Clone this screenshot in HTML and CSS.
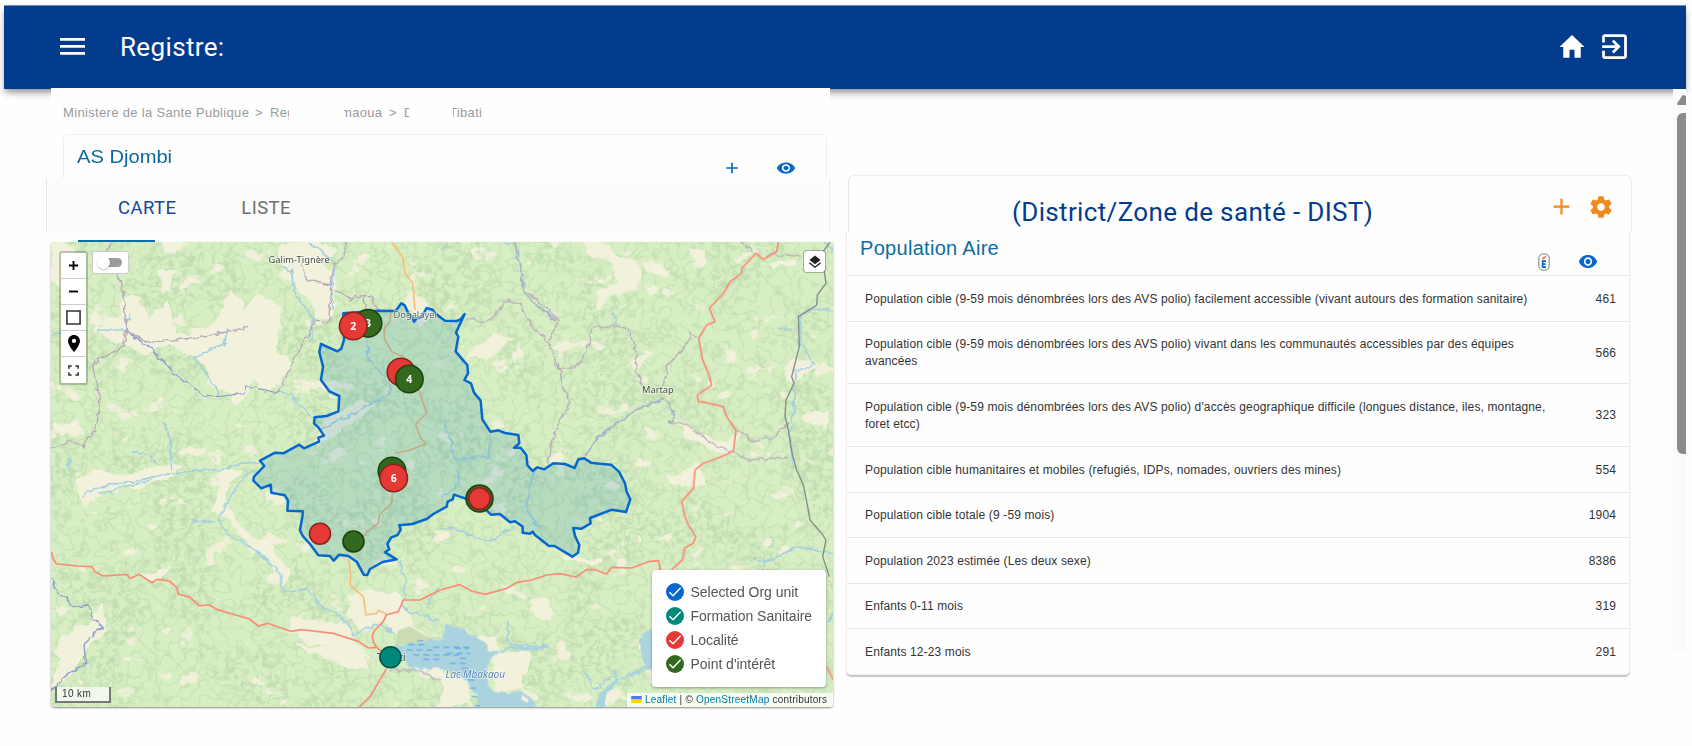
FILE: index.html
```html
<!DOCTYPE html>
<html lang="fr">
<head>
<meta charset="utf-8">
<title>Registre</title>
<link rel="stylesheet" href="styles.css">
</head>
<body>
<div class="app">
<header class="topbar">
  <svg class="i-menu" viewBox="0 0 25 17" preserveAspectRatio="none"><path fill="#fff" d="M0 0h25v2.8H0zM0 6.9h25v2.8H0zM0 13.9h25v2.8H0z"/></svg>
  <h1 class="brand">Registre:</h1>
  <svg class="i-home" viewBox="0 0 24 24" preserveAspectRatio="none"><path fill="#fff" d="M10 20v-6h4v6h5v-8h3L12 3 2 12h3v8z"/></svg>
  <svg class="i-exit" viewBox="0 0 24 24"><path fill="#fff" d="M10.09 15.59 11.5 17l5-5-5-5-1.41 1.41L12.67 11H3v2h9.67l-2.58 2.59zM19 3H5c-1.11 0-2 .9-2 2v4h2V5h14v14H5v-4H3v4c0 1.1.89 2 2 2h14c1.1 0 2-.9 2-2V5c0-1.1-.9-2-2-2z"/></svg>
</header>
<main class="content">
  <section class="left">
    <div class="upper">
      <nav class="crumbs"><span class="c1">Ministere de la Sante Publique</span><span class="c2">&gt;</span><span class="c3">Reg</span><span class="c4"><span>maoua</span></span><span class="c5">&gt;</span><span class="c6">D</span><span class="c7"><span>Tibati</span></span></nav>
      <div class="unit">
        <span class="unit-name">AS Djombi</span>
        <svg class="i-sm i-add" viewBox="0 0 24 24" preserveAspectRatio="none"><path fill="#0667d0" d="M19 13h-6v6h-2v-6H5v-2h6V5h2v6h6v2z"/></svg>
        <svg class="i-sm" viewBox="0 0 24 24" preserveAspectRatio="none"><path fill="#0667d0" d="M12 4.500C7 4.500 2.730 7.610 1 12c1.730 4.390 6 7.500 11 7.500s9.270-3.110 11-7.500c-1.730-4.390-6-7.500-11-7.500zM12 17c-2.760 0-5-2.240-5-5s2.240-5 5-5 5 2.240 5 5-2.240 5-5 5zm0-8c-1.660 0-3 1.340-3 3s1.340 3 3 3 3-1.340 3-3-1.340-3-3-3z"/></svg>
      </div>
    </div>
    <div class="tabs"><span class="tab on">CARTE</span><span class="tab">LISTE</span></div>
    <div class="ink"></div>
    <div class="map">
<svg class="tiles" viewBox="51 242 782 465">
<defs>
<filter id="wood" x="0" y="0" width="100%" height="100%" color-interpolation-filters="sRGB"><feTurbulence type="fractalNoise" baseFrequency=".014 .016" numOctaves="2" seed="4" result="a"/><feColorMatrix in="a" values="0 0 0 0 .75 0 0 0 0 .86 0 0 0 0 .69 9 0 0 0 -4.300" result="m"/><feTurbulence type="fractalNoise" baseFrequency=".16" numOctaves="3" seed="9"/><feColorMatrix values="0 0 0 0 .75 0 0 0 0 .86 0 0 0 0 .7 0 8 0 0 -4"/><feComposite in2="m" operator="in"/></filter>
<filter id="vein" x="0" y="0" width="100%" height="100%" color-interpolation-filters="sRGB"><feTurbulence type="fractalNoise" baseFrequency=".07" numOctaves="2" seed="21"/><feColorMatrix values="0 0 0 0 .73 0 0 0 0 .85 0 0 0 0 .68 1 0 0 0 0"/><feComponentTransfer><feFuncA type="table" tableValues="0 0 0 0 0 0 0 0 0 0 0 .1 .85 .1 0 0 0 0 0 0 0 0 0 0 0"/></feComponentTransfer></filter>
<filter id="clear" x="0" y="0" width="100%" height="100%" color-interpolation-filters="sRGB"><feTurbulence type="fractalNoise" baseFrequency=".035 .045" numOctaves="4" seed="33"/><feColorMatrix values="0 0 0 0 .945 0 0 0 0 .945 0 0 0 0 .86 0 0 14 0 -9.500"/></filter>
<filter id="rough" x="-10%" y="-10%" width="120%" height="120%" color-interpolation-filters="sRGB"><feTurbulence type="fractalNoise" baseFrequency=".05" numOctaves="3" seed="2"/><feDisplacementMap in="SourceGraphic" scale="18" xChannelSelector="R" yChannelSelector="G"/></filter>
<filter id="wiggle" filterUnits="userSpaceOnUse" x="40" y="230" width="800" height="485" color-interpolation-filters="sRGB"><feTurbulence type="fractalNoise" baseFrequency=".13" numOctaves="2" seed="7"/><feDisplacementMap in="SourceGraphic" scale="7" xChannelSelector="R" yChannelSelector="G"/></filter>
</defs>
<rect x="50" y="242" width="783" height="465" fill="#d7edc2"/>
<rect x="50" y="242" width="783" height="465" filter="url(#wood)" opacity=".65"/>
<rect x="50" y="242" width="783" height="465" filter="url(#vein)" opacity=".75"/>
<rect x="50" y="242" width="783" height="465" filter="url(#clear)"/>
<g fill="#f1f1dc" filter="url(#rough)">
 <g transform="translate(40 230) scale(.33333)">
  <path d="M30 37h65l-10 70 20 40-30 30-45-20z"/><path d="M240 220l60-20 20 80 60-60 30 80 60 10 50-40 60-100 40 70 30-50 80 50-20 90 40 80-50 70-60-30-40 80-70-40-60-110-70-30-110 20-70-50z"/>
  <path d="M730 37h150l-20 60 30 60-10 90-50 20-30-60-60-60-20-60z"/><path d="M150 300l110-60 30 60-60 40zM360 120h40v60h-30zM370 37h70l-20 40h-40zM35 580l90-10-60 50z"/><path d="M820 620l50-70 100-40 30 20-80 60-80 60z"/><path d="M1090 230l40-40 50 60-40 40z"/>
 </g>
 <g transform="translate(440 230) scale(.33333)">
  <path d="M430 37h70l20 30 60 20 30 40-20 60-50 0-60 60-10-50 60-50-30-60-60-10zM610 80l50 20 30 30-20 10-60-30zM750 60h50v50l-30 10zM80 380l90-70 40 10-30 40-90 30zM210 370l20 50 10-80zM970 95l90-5v20l-70 8zM1030 410l80-30 20 30-70 50zM1090 545l70 0-10 50-50-20zM690 570l80 20 90 60 30-50 0 80-100-30zM610 180l50-2-20 20z"/>
 </g>
 <g transform="translate(40 470) scale(.33333)">
  <path d="M95 30l60-20h170l50-30 60 20-110 50-130 20-60 40zM540 0l60 0-40 70 20 80 120 90 50 60-10 60-60-20 10-60-110-110-70-50 20-60zM740 440l180 20 30 60 50 50-100-30-160-50zM920 360l150 10 60 110 60 10-80 30-80-60-80 20zM60 510l80-60 50-50 10 80-60 60-50 80-60 30 30-80zM760 520l190 20 50 60-80-10zM300 310l90-20-40 50z"/><path d="M1090 540l110 40v60l-90-60z"/>
 </g>
 <g transform="translate(440 470) scale(.33333)">
  <path d="M270 370l50 20 10 60-20 0-50-40zM680 10l90-10 40 40-80 20zM60 480l100 20 40 60-100-20zM165 550l90-10 10 60-30 60-60 0zM0 580l60 30 40 60 0 40H0zM580 180l30 30-10 20zM370 260l40 0 80 0 0 30-110-10z"/>
 </g>
</g>
<g transform="translate(380 550) scale(.33333)">
 <path fill="#cbdcb4" d="M45 285l10-45 35-10 50 30 50 5-90 15z"/>
 <path fill="#aad3df" filter="url(#rough)" d="M40 290l60-14 85-8 10-45 45 14 48 22 30 20 5 22 30 4 35-18h40l75 2-5 8-60 5-50-4-35 12-22 14-10 30 2 40 14 34 50 2 40-10 35 30 10 35H290l5-40-30-36 0-20-90-35-60 5-45-25z"/>
 <path fill="#f1f1dc" d="M342 330l50-20 50 12-5 30-30 30 30 25-40 15-45-5-15-40zM425 434l22 15-5 10-18-12z"/>
 <path fill="#aad3df" filter="url(#rough)" d="M800 240l30-4v110l-70 30-40 16-40 38-10 40h-25l15-40 40-35 55-25 45-22-14-30-8-40z"/>
 <path stroke="#4d9ee8" stroke-width="3" stroke-dasharray="18 12" d="M85 284h60M112 272h30M80 300h80M100 315h150M160 292h110M130 328h60M200 310h70M210 340h60M225 295h40M240 325h30M245 355h30M265 390h30M270 415h22M275 440h20M285 468h15" fill="none"/>
</g>
<g fill="none" stroke="#a5cfe2" stroke-width="1.300" stroke-linejoin="round" filter="url(#wiggle)">
 <g transform="translate(40 230) scale(.33333)" stroke-width="5">
  <path d="M725 110l30 10 5 60 60 90-5 60M805 37l55 40 25 25-10 60 5 80M170 300l85 0 15-50M30 315l50-10M560 295l-5 45-95 45 50 60 30 55M715 485l35 10 60 60 20 10M370 575l20 50 5 95M275 665l60 10 20 30M90 680l-5 40M480 720h70l60-20 60-5M980 330l5 60 60 60 5 40-90 50-120 60"/>
 </g>
 <g transform="translate(440 230) scale(.33333)" stroke-width="5">
  <path d="M0 60l25-15M190 40l30 5M520 250l10 35M1155 37l25 30M1180 240l-60-5-40 25 0 80 45 65-60 20-5 120-10 60 10 110M1015 295l45 5M15 570l15 60 15 60 100-10 5-70M435 680l40-60"/>
 </g>
 <g transform="translate(40 470) scale(.33333)" stroke-width="5">
  <path d="M125 80l50-30 150-25 50-15 130-10M175 70l160-40M640 0l-30 20-50 80-25 50 40 50 70 40 80 70 0 50 30 5 45-10 50 60 60 30 30 50 60-30 60 20M455 155l70 0M1080 270l15 60-5 80 60 30 50 10M1200 350l-40 50"/>
 </g>
 <g transform="translate(440 470) scale(.33333)" stroke-width="5">
  <path d="M55 0v40l-45 40M0 170l60 10 60 30 40 0 60-40M280 0l-20 100 20 60 30 5M430 600l30 60 60-40M520 600l10 40M205 450l-5 60M200 515l60 15 60-2M940 260l30 20 100-50 110 20M970 280v20M1180 430l-20 30"/>
 </g>
</g>
<g fill="none" stroke="#b7a9bb" stroke-width="4" stroke-linejoin="round" filter="url(#wiggle)">
 <path transform="translate(40 230) scale(.33333)" d="M210 37l-10 40 45 80 10 90 5 60 70 30 100-10 100-15 90-20M260 270l-10 80-90 50 20 110-10 80-40 60-40-20-60 30M715 485l60-120 50-90 40 0 10-100 60 30 60-10 20 50M785 100l15 50 70 15 10-60 30-20 10-48M970 200l10 50"/>
 <path transform="translate(440 230) scale(.33333)" d="M80 262l50 15 40-20 20-48 50 10 40 75 45 40 30 80 50 0 20-20 20-50 10-50 80-5 30 10 25 70-5 40 25 70M670 470l10-60 70-80 0-20 25 10M330 330l25-60-40-40-60-50M355 400l15 80 20 40-40 60-10 60-20 60M685 575l60 10 60 50 80 35 40 20 120-10M890 600l50 30 60-5 45-50M905 37l40 35M985 75l60 0 40 5"/>
 <path transform="translate(40 470) scale(.33333)" d="M1050 600l80 0 70 30"/>
</g>
<g fill="none" stroke="#929bd0" stroke-width="4" stroke-linejoin="round" filter="url(#wiggle)">
 <path transform="translate(40 230) scale(.33333)" d="M260 305l60 40 90 90 80 60 50 5 70-10 10-20 95 18"/>
 <path transform="translate(40 470) scale(.33333)" d="M32 320l20 50 60 40 35-5 5 30 35 35-55 50 5 60-50 30-55 55"/>
 <path transform="translate(440 230) scale(.33333)" d="M225 37l15 80 15 70 40 45 50 35M435 680l40-60 60-45 60-40 75-30 35 40-20 35"/>
</g>
<g fill="none" stroke="#e9b07e" stroke-width="1.700" stroke-linejoin="round">
 <path stroke="#f8bf7b" transform="translate(40 230) scale(.33333)" stroke-width="5" d="M1055 37l33 43 7 50 23 30 7 80"/>
 <path transform="translate(250 290) scale(.33333)" stroke-width="4.500" d="M423 60l-3 35-18 20 1 30 22 40 35 15 50 110 20 60-33 32 13 38 17 22-47 18-45 10M427 610l-2 30-37 35-3 25-35 25-40 65"/>
 <path stroke="#f8bf7b" transform="translate(40 470) scale(.33333)" stroke-width="5" d="M925 262l7 48-2 35 40 35 8 55 32-5 5-9 25 11"/>
</g>
<g fill="none" stroke="#f98d77" stroke-linejoin="round">
 <path transform="translate(40 470) scale(.33333)" stroke-width="5" d="M34 245l6 23 10 14 25 2 35 4 45 2 10 15 25 13 68-5 14 12 26-12 37 25 17-10 36 5 22 19 5 20 35 10 28 25 30-2 22 13 98 29 27 21 28-8 69 24 33-5 95 11 75 24 30 20 25-2 15 13M1010 532q-25-35 0-57t28-40l37-10 15-35 50 0 60-30 60-16 35 19 40 10 65-18 32-18 43-7 45-15 40-4 48 10 32-22h25l35 13 15-20 60 2 50-19 30-3 7 28M1040 595l-50 85-33 32"/>
 <path transform="translate(440 470) scale(.33333)" stroke-width="5" d="M695 298l32-28 8-37 25-13 7-20-22-35-10-25-10-45 35-40 5-55M1160 590l20 40"/>
 <path transform="translate(440 230) scale(.33333)" stroke-width="5" d="M765 720l25-20 50-18 40-18 8-64-28-40-10-30-50-12-25-3-3-20 43-30-10-35-17-40-12-65 24-40 25-10-17-40 42-45 20-35 35-25v-15l43-45 22 18 40-23 5-28"/>
</g>
<g fill="none" stroke="#858b86">
 <path transform="translate(440 230) scale(.33333)" stroke-width="4" stroke-linejoin="round" d="M1170 37l-25 33 13 90-26 35-2 30-55 35 3 90-23 90 7 20-24 50-3 50 10 40 10 65 15 55 20 45 13 65 7 40 35 40 13 20-10 50 20 60"/>
</g>
<g class="place" fill="#454b43"><text x="268.500" y="263">Galim-Tignère</text><text x="642" y="393">Martap</text><text x="377" y="661" font-size="11">Tibati</text><text class="lake" x="445.500" y="678">Lac Mbakaou</text></g>
<path transform="translate(250 290) scale(.33333)" fill="#0e7fb0" fill-opacity=".16" stroke="#0667cf" stroke-width="7.500" stroke-linejoin="round" d="M385 62L437 63 454 40 464 46 476 72 488 82 492 95 500 85 514 82 530 54 549 60 562 75 585 92 620 93 632 88 644 72 618 128 625 140 617 184 640 212 652 225 654 250 643 270 663 280 672 308 692 332 697 388 721 425 745 421 765 429 805 435 808 460 792 473 812 473 829 495 832 525 848 543 862 532 883 538 910 520 945 522 974 534 985 508 1003 505 1023 518 1050 521 1083 524 1107 545 1125 580 1130 605 1141 628 1128 666 1086 659 1020 684 1022 700 995 716 970 714 975 738 988 765 984 788 967 800 914 768 896 767 855 735 848 725 840 731 818 728 818 710 795 694 780 697 750 672 723 674 688 640 612 614 608 628 593 635 590 650 550 672 530 687 487 702 448 706 452 718 443 735 424 742 412 762 418 778 405 787 440 808 398 816 360 837 352 855 341 854 320 815 295 798 268 794 251 812 240 798 205 796 180 762 158 738 150 720 158 675 158 664 112 662 114 632 105 616 64 608 62 584 34 595 10 572 12 560 43 528 30 512 75 488 100 490 148 464 162 475 195 460 207 455 205 443 222 437 205 412 192 400 194 382 230 378 265 364 268 318 238 304 213 270 219 230 208 186 213 162 262 184 274 176 282 150 280 70Z"/>
<text class="place" x="393.500" y="317.500" fill="#54645d">Dogalayel</text>
<g class="pins" stroke-width="1.600">
 <g fill="#33691e" stroke="#1f4210"><circle cx="368" cy="323.300" r="13.800"/></g>
 <text x="368" y="327">3</text>
 <g fill="#e53935" stroke="#8f211e"><circle cx="353.300" cy="326" r="13.800"/><circle cx="401" cy="372" r="13.800"/></g>
 <text x="353.300" y="330">2</text>
 <g fill="#33691e" stroke="#1f4210"><circle cx="409.300" cy="379" r="13.800"/><circle cx="392" cy="471" r="13.800"/><circle cx="479.500" cy="498.500" r="13.500"/><circle cx="353.500" cy="541.500" r="10.500"/></g>
 <text x="409.300" y="383">4</text>
 <g fill="#e53935" stroke="#8f211e"><circle cx="393.700" cy="478" r="13.800"/><circle cx="479.500" cy="498.500" r="10.700"/><circle cx="320" cy="533.700" r="10.500"/></g>
 <text x="393.700" y="482">6</text>
 <circle cx="390.500" cy="657.300" r="10.500" fill="#00897b" stroke="#00564d"/>
</g>
</svg>
      <div class="tools">
        <span><svg viewBox="0 0 12 12"><path stroke="#000" stroke-width="2" d="M1 6h10M6 1v10"/></svg></span>
        <span><svg viewBox="0 0 12 12"><path stroke="#000" stroke-width="2" d="M1 6h10"/></svg></span>
        <span><svg class="w16" viewBox="0 0 16 16"><path fill="none" stroke="#333" stroke-width="1.700" d="M1 1h14v14H1z"/></svg></span>
        <span><svg class="pin" viewBox="5 2 14 20"><path d="M12 2C8.130 2 5 5.130 5 9c0 5.250 7 13 7 13s7-7.750 7-13c0-3.870-3.130-7-7-7zm0 9.500a2.500 2.500 0 1 1 0-5 2.500 2.500 0 0 1 0 5z"/></svg></span>
        <span><svg viewBox="0 0 12 12"><path fill="none" stroke="#333" stroke-width="1.700" d="M1 4V1h3M8 1h3v3M11 8v3H8M4 11H1V8"/></svg></span>
      </div>
      <div class="toggle"><i></i><b></b></div>
      <div class="layers"><svg viewBox="0 0 24 24"><path fill="#222" d="M12 1 2.500 8.500 12 16l9.500-7.500z"/><path fill="none" stroke="#222" stroke-width="2.200" d="M2.500 13.500 12 21l9.500-7.500"/></svg></div>
      <div class="scale">10 km</div>
      <div class="legend">
        <div><i class="dot d1"><svg viewBox="0 0 18 18"><path d="M3.500 9.500l3.800 3.600L15 5"/></svg></i>Selected Org unit</div>
        <div><i class="dot d2"><svg viewBox="0 0 18 18"><path d="M3.500 9.500l3.800 3.600L15 5"/></svg></i>Formation Sanitaire</div>
        <div><i class="dot d3"><svg viewBox="0 0 18 18"><path d="M3.500 9.500l3.800 3.600L15 5"/></svg></i>Localité</div>
        <div><i class="dot d4"><svg viewBox="0 0 18 18"><path d="M3.500 9.500l3.800 3.600L15 5"/></svg></i>Point d'intérêt</div>
      </div>
      <div class="credit"><svg viewBox="0 0 12 8"><path fill="#4c7be1" d="M0 0h12v4H0z"/><path fill="#ffd500" d="M0 4h12v4H0z"/></svg><a>Leaflet</a> | © <a>OpenStreetMap</a> contributors</div>
    </div>
  </section>
  <section class="right">
    <div class="rhead">
      <h2>(District/Zone de santé - DIST)</h2>
      <svg class="i-plus" viewBox="0 0 24 24"><path fill="#ef8a1c" d="M19 13h-6v6h-2v-6H5v-2h6V5h2v6h6v2z"/></svg>
      <svg class="i-gear" viewBox="0 0 24 24"><path fill="#ef8a1c" d="M19.430 12.980c.04-.32.070-.64.070-.98s-.03-.66-.07-.98l2.110-1.650c.19-.15.240-.42.120-.64l-2-3.460c-.12-.22-.39-.3-.61-.22l-2.490 1c-.52-.4-1.080-.73-1.690-.98l-.38-2.650C14.460 2.180 14.250 2 14 2h-4c-.25 0-.46.180-.49.420l-.38 2.650c-.61.250-1.170.590-1.690.98l-2.490-1c-.23-.09-.49 0-.61.220l-2 3.460c-.13.220-.07.490.12.640l2.110 1.650c-.04.320-.07.650-.07.980s.03.660.07.980l-2.110 1.650c-.19.150-.24.420-.12.640l2 3.460c.12.220.39.300.61.220l2.490-1c.52.400 1.080.730 1.690.980l.38 2.650c.03.240.24.420.49.420h4c.25 0 .46-.18.490-.42l.38-2.650c.61-.25 1.170-.59 1.690-.98l2.490 1c.23.090.49 0 .61-.22l2-3.460c.12-.22.070-.49-.12-.64l-2.110-1.650zM12 15.500c-1.930 0-3.500-1.570-3.500-3.500s1.570-3.500 3.500-3.500 3.500 1.570 3.500 3.500-1.570 3.500-3.500 3.500z"/></svg>
    </div>
    <div class="card">
      <div class="chead">
        <h3>Population Aire</h3>
        <svg class="i-e" viewBox="0 0 12 18"><rect x=".8" y=".8" width="10.400" height="16.400" rx="4.500" fill="#fff" stroke="#999" stroke-width="1.300"/><path fill="none" stroke="#f26a3a" stroke-width="1.300" d="M4 4.500l1.500 1.300L8 3"/><path fill="none" stroke="#0667d0" stroke-width="1.700" d="M8 8.200H4.600v6H8M4.600 11.200h3"/></svg>
        <svg class="i-eye" viewBox="0 0 24 24" preserveAspectRatio="none"><path fill="#0667d0" d="M12 4.500C7 4.500 2.730 7.610 1 12c1.730 4.390 6 7.500 11 7.500s9.270-3.110 11-7.500c-1.730-4.390-6-7.500-11-7.500zM12 17c-2.760 0-5-2.240-5-5s2.240-5 5-5 5 2.240 5 5-2.240 5-5 5zm0-8c-1.660 0-3 1.340-3 3s1.340 3 3 3 3-1.340 3-3-1.340-3-3-3z"/></svg>
      </div>
      <div class="row"><span>Population cible (9-59 mois dénombrées lors des AVS polio) facilement accessible (vivant autours des formation sanitaire)</span><b>461</b></div>
      <div class="row two"><span>Population cible (9-59 mois dénombrées lors des AVS polio) vivant dans les communautés accessibles par des équipes<br>avancées</span><b>566</b></div>
      <div class="row two"><span>Population cible (9-59 mois dénombrées lors des AVS polio) d'accès geographique difficile (longues distance, iles, montagne,<br>foret etcc)</span><b>323</b></div>
      <div class="row"><span>Population cible humanitaires et mobiles (refugiés, IDPs, nomades, ouvriers des mines)</span><b>554</b></div>
      <div class="row"><span>Population cible totale (9 -59 mois)</span><b>1904</b></div>
      <div class="row"><span>Population 2023 estimée (Les deux sexe)</span><b>8386</b></div>
      <div class="row"><span>Enfants 0-11 mois</span><b>319</b></div>
      <div class="row"><span>Enfants 12-23 mois</span><b>291</b></div>
    </div>
  </section>
  <aside class="scroll"><svg viewBox="0 0 9 10"><path fill="#8b8b8b" d="M6.500 0Q8 0 9 1.500V10H1Q-.3 10 .4 8L5 1Q5.600 0 6.500 0z"/></svg><i></i></aside>
</main>
</div>
</body>
</html>
```
FILE: styles.css
```css
*{box-sizing:border-box}
body{margin:0;background:#fefefe;font-family:"Liberation Sans",Arial,sans-serif;color:#333}
h1,h2,h3{margin:0;font-weight:400}
svg{display:block;flex:none}
.app{width:1692px;height:746px;padding:5px 6px 0 4px;overflow:hidden}
.topbar{height:84px;background:#033c8c;border-top:1px solid #6d90bd;display:flex;align-items:center;padding:0 55px 2px 56px;box-shadow:0 4px 6px -1px rgba(0,0,0,.35),0 6px 10px -2px rgba(0,0,0,.12)}
.i-menu{width:25px;height:17px}
.brand{font:400 26px/34px Roboto,sans-serif;color:#fff;margin-left:35px;flex:1;letter-spacing:.35px}
.i-home{width:30px;height:32px}
.i-exit{width:33px;height:33px;margin-left:11px}
.content{display:flex;height:652px}
.left{width:790px;margin-left:42px;margin-top:-1px;position:relative}
.upper{margin:0 6px 0 5px;width:779px;height:90px;background:#fefefe;padding:16px 3px 0 12px}
.crumbs{display:flex;height:18px;font-size:13px;line-height:18px;color:#9b9b9b;letter-spacing:.33px;white-space:nowrap}
.crumbs>span{overflow:hidden}
.c1{width:192px}.c2{width:15px}.c3{width:19px}.c4{width:45px;margin-left:55px}.c4 span{margin-left:-3px}.c5{width:15px}.c6{width:5px}.c7{margin-left:44px;width:34px}.c7 span{margin-left:-4px}
.unit{margin-top:12px;height:45px;border:1px solid #f0f0f0;border-bottom:0;border-radius:5px 5px 0 0;display:flex;align-items:flex-end;padding:0 30px 0 13px}
.unit-name{font-size:17.500px;line-height:24px;color:#0a68a0;transform:scaleX(1.15);transform-origin:0 0;margin-bottom:10px}
.i-sm{width:20px;height:18px;margin-bottom:2px}
.i-add{margin-left:auto;margin-right:34px}
.tabs{height:54px;width:784px;background:#fcfcfc;border-left:1px solid #e8e8e8;border-right:1px solid #ededed;display:flex;gap:65px;padding:17px 0 0 71px;font:400 18.500px/26px Roboto,sans-serif;color:#6f6f6f;letter-spacing:.4px}
.tab.on{color:#1a4796}
.ink{margin:8px 0 0 32px;width:77px;height:2px;background:#0b6fa4}
.map{position:relative;margin-left:5px;width:782px;height:465px;box-shadow:0 1px 2px rgba(0,0,0,.45);overflow:hidden;border-radius:0 0 4px 4px}
.tiles{width:782px;height:465px}
.place{font:9.300px "Noto Sans",sans-serif;paint-order:stroke;stroke:#fff;stroke-opacity:.6;stroke-width:1.500px}
.lake{font-style:italic;font-size:10px;fill:#5c86b5}
.pins text{font:bold 10.500px "Noto Sans",sans-serif;fill:#fff;text-anchor:middle}
.tools{position:absolute;left:8px;top:9px;width:29px;height:134px;border:2px solid rgba(0,0,0,.2);border-radius:3px;background:#fff;background-clip:padding-box}
.tools span{height:26px;display:flex;align-items:center;justify-content:center;border-bottom:1px solid #ccc}
.tools span:last-child{border:0;height:26px}
.tools svg{width:11px;height:11px}
.tools .w16{width:15px;height:15px}
.tools .pin{width:12px;height:17px}
.toggle{position:absolute;left:41px;top:9px;width:37px;height:23px;background:#fff;border:1px solid #ccc;border-radius:3px}
.toggle i{position:absolute;left:10px;top:6px;width:19px;height:9px;border-radius:5px;background:#9b9b9b}
.toggle b{position:absolute;left:4px;top:4px;width:13px;height:13px;border-radius:7px;background:#fff;box-shadow:0 1px 2px rgba(0,0,0,.25)}
.layers{position:absolute;left:752px;top:8px;width:23px;height:23px;background:#fff;background-clip:padding-box;border:1.500px solid rgba(0,0,0,.25);border-radius:4px;display:flex;align-items:center;justify-content:center}
.layers svg{width:14px;height:14px}
.scale{position:absolute;left:4px;top:445px;width:56px;height:16px;border:2px solid #777;border-top:0;background:rgba(255,255,255,.7);font-size:10px;line-height:14px;padding-left:5px;letter-spacing:.4px}
.legend{position:absolute;left:601px;top:328px;width:174px;height:117px;background:#fff;border-radius:4px;box-shadow:0 1px 3px rgba(0,0,0,.35);padding:10px 0 0 14px;font-size:14px;color:#555;letter-spacing:-.03px}
.legend div{height:24px;display:flex;align-items:center;gap:7px}
.dot{width:17.500px;height:17.500px;border-radius:9px}
.dot path{fill:none;stroke:#fff;stroke-width:1.500}
.d1{background:#0667cf}.d2{background:#00897b}.d3{background:#e53935}.d4{background:#33691e}
.credit{position:absolute;right:0;bottom:0;width:206px;height:14px;background:rgba(255,255,255,.8);font-size:10px;line-height:14px;white-space:nowrap;padding-left:4px;letter-spacing:.22px}
.credit svg{display:inline-block;width:11px;height:7px;margin-right:3px}
.credit a{color:#0078a8}
.right{width:785px;margin:86px 0 0 10px}
.rhead{height:57px;width:784px;margin-left:2px;border:1px solid #f0f0f0;border-left-color:#e6e6e6;border-bottom:0;border-radius:6px 6px 0 0;display:flex;padding-right:17px}
.rhead h2{font:400 26px/34px Roboto,sans-serif;color:#033c8c;margin:19px 0 0 163px;white-space:nowrap;letter-spacing:.35px}
.i-plus{width:27px;height:27px;margin:17px 0 0 auto}
.i-gear{width:26px;height:26px;margin:18px 0 0 13px}
.card{width:784px;height:443px;border:1px solid #eee;border-top:0;border-radius:0 0 5px 5px;box-shadow:0 2px 1px rgba(0,0,0,.22)}
.chead{height:43px;display:flex;padding:3px 31px 0 13px}
.chead h3{font-size:20px;line-height:26px;color:#0f6ca0;flex:1;letter-spacing:.3px}
.i-e{width:12px;height:18px;margin:18px 28px 0 0}
.i-eye{width:20px;height:21px;margin-top:16px}
.row{height:45.600px;border-top:1.500px solid #e6e6e6;display:flex;align-items:center;justify-content:space-between;padding:2px 13px 0 18px;font-size:12px;line-height:17.300px;letter-spacing:.13px;white-space:nowrap}
.row.two{height:62.700px}
.row b{font-weight:400}
.scroll{width:13px;margin-left:auto;height:564px;background:#fbfbfb;padding:6px 0 0 4px}
.scroll svg{width:9px;height:10px}
.scroll i{display:block;margin-top:8px;height:341px;background:#8b8b8b;border-radius:6px 0 0 6px}
```
